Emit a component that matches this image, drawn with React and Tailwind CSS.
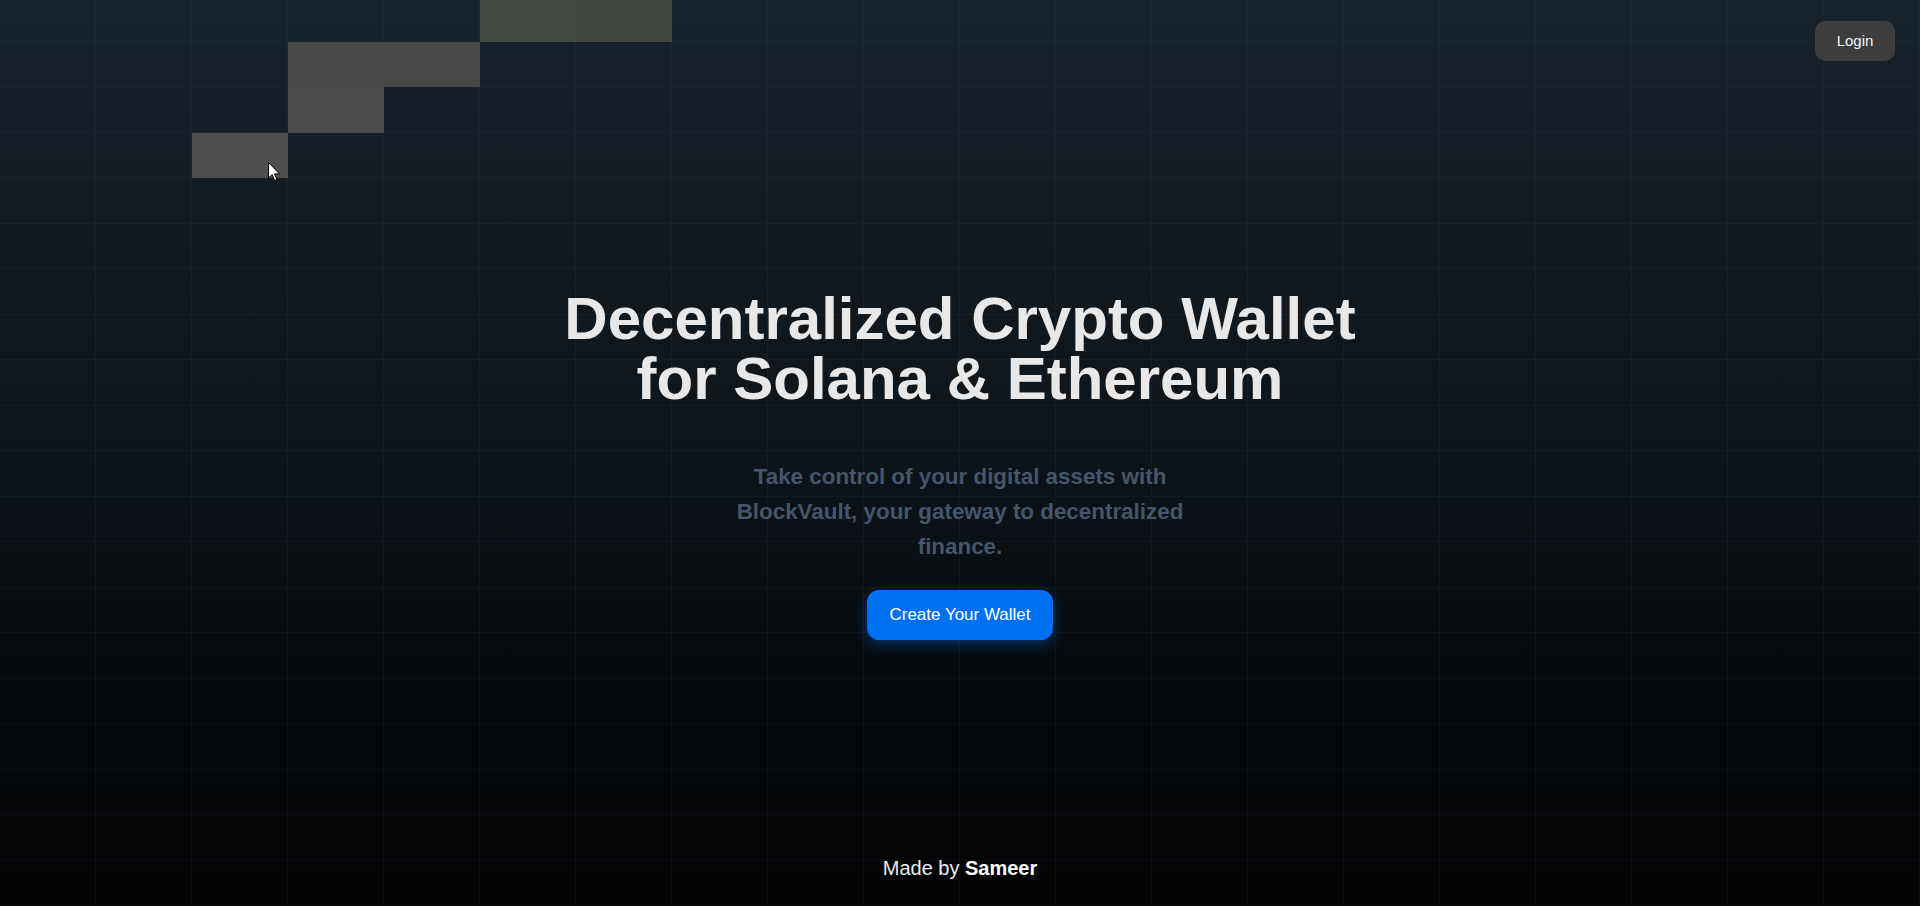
import React from "react";

const lit = {
  "0-5": "bg-[#444a42]",
  "0-6": "bg-[#41463f]",
  "1-3": "bg-[#494947]",
  "1-4": "bg-[#484846]",
  "2-3": "bg-[#4b4b4a]",
  "3-2": "bg-[#4e4e4d]",
};

function Boxes() {
  const cells = [];
  for (let r = 0; r < 20; r++) {
    for (let c = 0; c < 20; c++) {
      const key = `${r}-${c}`;
      cells.push(
        <div
          key={key}
          className={`h-[45.5px] border-r border-b border-[#4755691f] ${lit[key] || ""}`}
        />
      );
    }
  }
  return (
    <div className="absolute left-0 top-[-4px] w-[1920px] grid grid-cols-[repeat(20,96px)] pointer-events-none">
      {cells}
    </div>
  );
}

function Cursor() {
  return (
    <svg
      className="absolute left-[268px] top-[162px]"
      width="13"
      height="20"
      viewBox="0 0 13 20"
    >
      <path
        d="M0.5 0.5 L0.5 16 L4.2 12.6 L6.6 18.6 L8.9 17.6 L6.5 11.9 L11.5 11.9 Z"
        fill="#fff"
        stroke="#000"
        strokeWidth="1"
        strokeLinejoin="round"
      />
    </svg>
  );
}

export default function App() {
  return (
    <div className="relative h-[906px] w-full overflow-hidden bg-linear-to-b from-[#18222b] via-[#0d1419] to-[#020304] font-['Liberation_Sans',Arial,sans-serif]">
      <Boxes />
      <Cursor />

      <div className="relative flex h-full flex-col">
        <header className="flex justify-end pt-[21px] pr-[25px]">
          <button className="h-10 w-20 rounded-[10px] bg-[#3d3d3d] text-[15px] text-neutral-100">
            Login
          </button>
        </header>

        <main className="flex flex-1 flex-col items-center pt-[228px]">
          <h1 className="text-center text-[60px] font-bold leading-[60px] text-[#e8e8e8]">
            Decentralized Crypto Wallet
            <br />
            for Solana &amp; Ethereum
          </h1>
          <p className="mt-[50px] max-w-lg text-center text-[22.4px] font-bold leading-[35px] text-[#45556c]">
            Take control of your digital assets with BlockVault, your gateway to decentralized finance.
          </p>
          <button className="mt-[26px] flex h-[50px] w-[186px] items-center justify-center rounded-xl bg-[#0070f3] text-[17px] text-white shadow-[0_4px_14px_0_rgba(0,118,255,0.39)]">
            Create Your Wallet
          </button>
        </main>

        <footer className="pb-6 text-center text-xl leading-7 text-[#e6eef7]">
          Made by <span className="font-bold text-white">Sameer</span>
        </footer>
      </div>
    </div>
  );
}
